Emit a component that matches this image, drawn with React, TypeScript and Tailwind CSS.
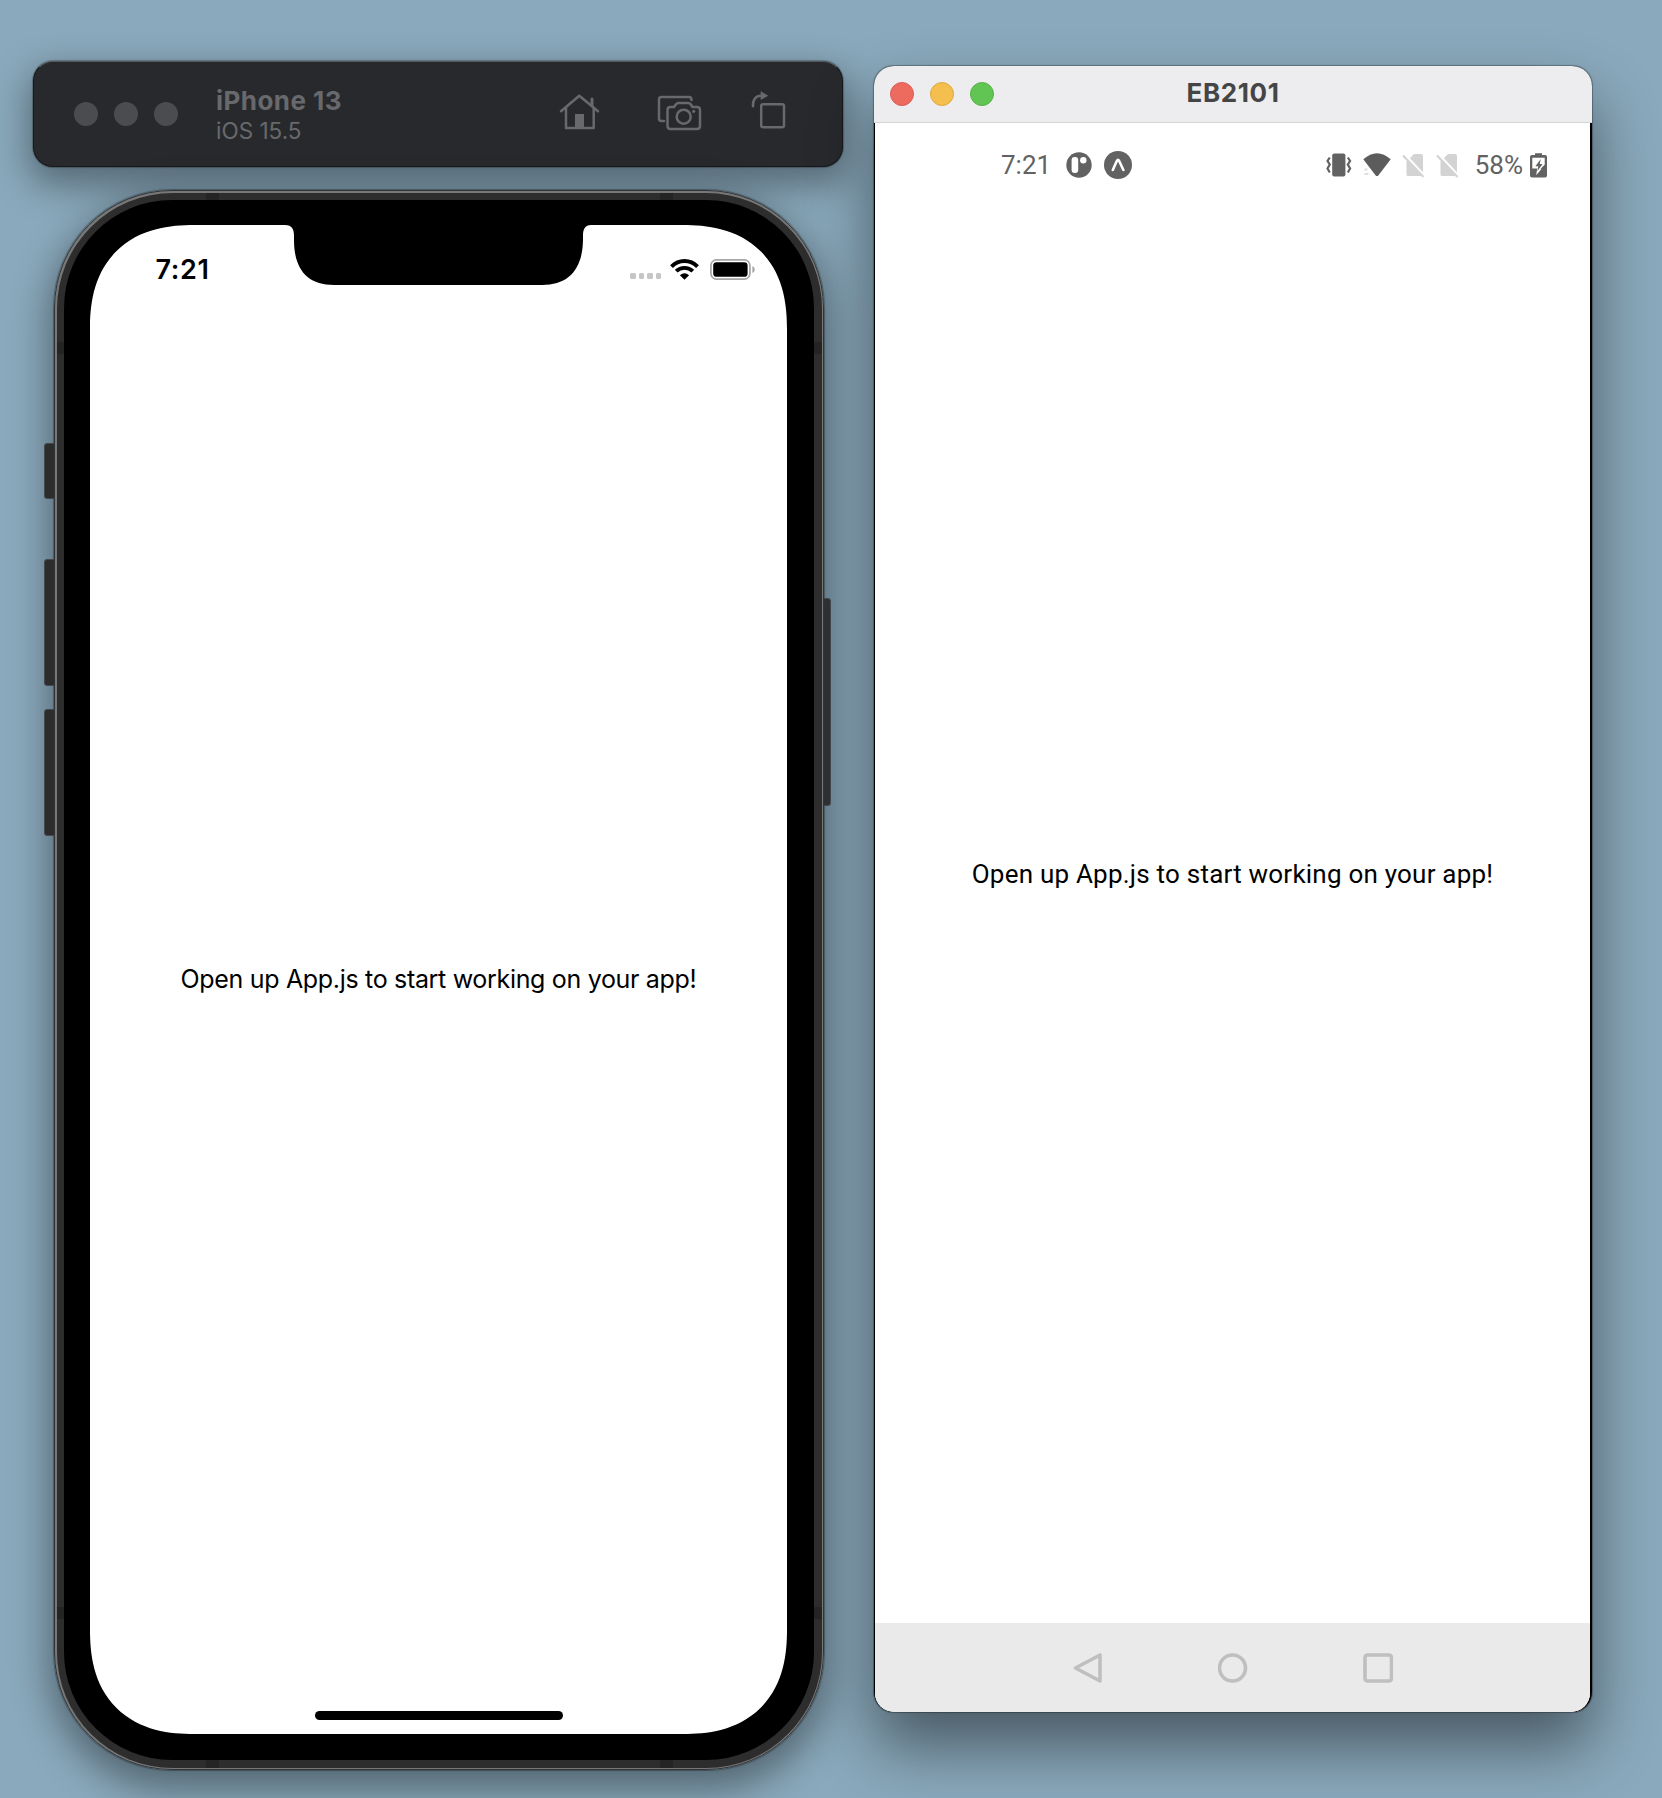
function HomeIcon() {
  return (
    <svg width="44" height="40" viewBox="0 0 44 40" fill="none" stroke="#68696c" strokeWidth="2.5" strokeLinecap="round" strokeLinejoin="round">
      <path d="M3 19.3 21.3 3.8 40 19.3" />
      <path d="M8 16V36H35.7V16" />
      <path d="M34 7v6.5" strokeWidth="3" />
      <path d="M17 22h9v14h-9z" fill="#68696c" stroke="none" />
    </svg>
  );
}

function CameraIcon() {
  return (
    <svg width="48" height="42" viewBox="0 0 48 42" fill="none" stroke="#68696c" strokeWidth="2.5" strokeLinecap="round" strokeLinejoin="round">
      <path d="M8 29H5.5Q3 29 3 26.5V7.5Q3 5 5.5 5H33Q35.5 5 35.5 8" />
      <path d="M14.5 15H18l2-2.8Q21 11 22.500 11h9.5Q33.700 11 34.700 12.200L36.500 15H41Q44 15 44 18V34Q44 37 41 37H14.500Q11.500 37 11.500 34V18Q11.500 15 14.500 15Z" />
      <circle cx="27.700" cy="24.700" r="7" />
      <circle cx="37.700" cy="19.300" r="1.600" fill="#68696c" stroke="none" />
    </svg>
  );
}

function RotateIcon() {
  return (
    <svg width="38" height="44" viewBox="0 0 38 44" fill="none" stroke="#68696c" strokeWidth="2.5" strokeLinecap="round" strokeLinejoin="round">
      <rect x="11.200" y="16.300" width="22.800" height="23" rx="2" />
      <path d="M3 18.300C2.600 11.500 6 7.800 11 7.700" />
      <path d="M10.700 3.300 18.300 7.700 10.700 12Z" fill="#68696c" stroke="none" />
    </svg>
  );
}

function IosWifi() {
  return (
    <svg width="29" height="21" viewBox="0 0 29 21" fill="none" stroke="#000" strokeWidth="3.900">
      <path d="M1.500 7.600C8.700 0.200 20.300 0.200 27.500 7.600" />
      <path d="M6.200 12.200C10.800 7.700 18.200 7.700 22.800 12.200" />
      <path d="M14.500 20.700 9.900 16.200Q14.500 12.400 19.100 16.200Z" fill="#000" stroke="none" />
    </svg>
  );
}

function IosBattery() {
  return (
    <svg width="46" height="21" viewBox="0 0 46 21">
      <rect x="0.900" y="0.900" width="39" height="19.200" rx="5.500" fill="none" stroke="#a6a6a6" strokeWidth="1.700" />
      <rect x="3.200" y="3.200" width="34.400" height="14.600" rx="3.400" />
      <path d="M42.400 7v7q2.400-1 2.400-3.500T42.400 7Z" fill="#a6a6a6" />
    </svg>
  );
}

function Notch() {
  return (
    <svg className="absolute left-[195px] top-0" width="306" height="61" viewBox="0 0 306 61">
      <path d="M0 0C7 0 9 4 9 11V15C9 44 22 60 49 60H257C284 60 297.500 44 298 15V11C298 4 300 0 306 0V-1H0Z" />
    </svg>
  );
}

function PatreonBadge() {
  return (
    <svg width="26" height="26" viewBox="0 0 26 26">
      <circle cx="13" cy="13" r="12.700" fill="#626262" />
      <rect x="5.600" y="5" width="6.600" height="16" rx="3" fill="#fff" />
      <circle cx="17.300" cy="8.300" r="3.200" fill="#fff" />
    </svg>
  );
}

function ExpoBadge() {
  return (
    <svg width="28" height="28" viewBox="0 0 28 28">
      <circle cx="14" cy="14" r="14" fill="#626262" />
      <path d="M8.800 19 12.900 9.800Q14 7.900 15.100 9.800L19.400 19" fill="none" stroke="#fff" strokeWidth="2.600" strokeLinecap="round" />
    </svg>
  );
}

function VibrateIcon() {
  return (
    <svg width="26" height="24" viewBox="0 0 26 24" fill="none" stroke="#626262" strokeWidth="2.200">
      <rect x="6.200" y="0.500" width="13.200" height="23" rx="2" fill="#626262" stroke="none" />
      <path d="M3.800 4.500 1.500 8 3.800 11.500 1.500 15.500 3.800 19.500" />
      <path d="M21.800 4.500 24.100 8 21.800 11.500 24.100 15.500 21.800 19.500" />
    </svg>
  );
}

function AndroidWifi() {
  return (
    <svg width="28" height="24" viewBox="0 0 28 24">
      <path d="M0.300 6.300Q14-5.700 27.700 6.300L15.300 22.400Q14 23.600 12.700 22.400Z" fill="#5c5c5c" />
      <path d="M1.500 16.500h3M1.500 21h4" stroke="#dedede" strokeWidth="2" />
    </svg>
  );
}

function NoSim() {
  return (
    <svg width="23" height="25" viewBox="0 0 23 25">
      <path d="M4.500 8.500 12 1H19Q21 1 21 3V22Q21 23 20 23H6Q4.500 23 4.500 21.500Z" fill="#d3d3d3" />
      <path d="M2.500 1 22.500 22.500" stroke="#fff" strokeWidth="2.200" />
      <path d="M1 2.500 21.500 24" stroke="#d3d3d3" strokeWidth="2" />
    </svg>
  );
}

function ChargingBattery() {
  return (
    <svg width="17" height="25" viewBox="0 0 17 25">
      <path d="M5 0.300h7V2h3Q17 2 17 4V22.500Q17 24.500 15 24.500H2Q0 24.500 0 22.500V4Q0 2 2 2H5Z" fill="#626262" />
      <path d="M2.300 4.800H14.700V12L6.200 22.300 7.200 15.500H2.300Z" fill="#fff" />
      <path d="M10.800 6 5.400 13.200H8.300L7.300 18.300 12.600 11H9.700Z" fill="#626262" />
      <path d="M14.800 11.500V16H10.600Z" fill="#626262" />
    </svg>
  );
}

function SimulatorToolbar() {
  return (
    <header className="ml-[33px] flex h-[106px] w-[810px] items-center rounded-[20px] border border-[#17191c] border-t-[#55595c] bg-[#28292d] pl-10 pr-[54px] shadow-[0_0_1px_1px_rgba(0,0,0,0.25),0_14px_36px_4px_rgba(0,0,0,0.38)]">
      <div className="flex gap-4">
        <i className="size-6 rounded-full bg-[#4b4c50]" />
        <i className="size-6 rounded-full bg-[#4b4c50]" />
        <i className="size-6 rounded-full bg-[#4b4c50]" />
      </div>
      <div className="ml-[38px] flex-1 text-[#68696c]">
        <div className="text-[26px] font-bold leading-[32px] tracking-[0.450px]">iPhone 13</div>
        <div className="text-[22.500px] leading-[27px]">iOS 15.5</div>
      </div>
      <div className="flex items-start pb-[6px]">
        <div className="mt-1"><HomeIcon /></div>
        <div className="ml-[54px] mt-1"><CameraIcon /></div>
        <div className="ml-[46px]"><RotateIcon /></div>
      </div>
    </header>
  );
}

function IPhone() {
  return (
    <section className="relative ml-[54px] mt-[23px] h-[1580px] w-[770px] rounded-[118px] shadow-[0_0_1px_1px_rgba(0,0,0,0.3),0_14px_38px_5px_rgba(0,0,0,0.4)]">
      <i className="absolute left-[-10px] top-[253px] h-[56px] w-[12px] rounded-[3px] border border-[#45494c] bg-[#2c2c2c]" />
      <i className="absolute left-[-10px] top-[369px] h-[127px] w-[12px] rounded-[3px] border border-[#45494c] bg-[#2c2c2c]" />
      <i className="absolute left-[-10px] top-[519px] h-[127px] w-[12px] rounded-[3px] border border-[#45494c] bg-[#2c2c2c]" />
      <i className="absolute right-[-7px] top-[408px] h-[208px] w-[10px] rounded-[3px] border border-[#45494c] bg-[#2c2f33]" />
      <div className="relative h-full rounded-[118px] border border-[#303436] bg-[#777] p-[1.500px]">
        <div className="relative h-full overflow-hidden rounded-[116px] bg-[#2d2d2d] p-[7.500px]">
          <i className="absolute left-[149px] top-0 h-full w-[13px] bg-[#242424]" />
          <i className="absolute right-[149px] top-0 h-full w-[13px] bg-[#242424]" />
          <i className="absolute left-0 top-[149px] h-[12px] w-full bg-[#242424]" />
          <i className="absolute bottom-[149px] left-0 h-[12px] w-full bg-[#242424]" />
          <div className="relative h-full rounded-[108px] bg-black pb-[26px] pl-[26px] pr-[27px] pt-[25px]">
            <div className="relative flex h-full flex-col overflow-hidden rounded-[104px] bg-white [corner-shape:superellipse(1.25)]">
              <Notch />
              <div className="absolute inset-x-0 top-[28px] flex h-8 items-center pl-[65.500px] pr-[31px]">
                <span className="pt-[2px] text-[27px] font-semibold leading-8 tracking-[0.600px]">7:21</span>
                <div className="ml-auto flex gap-[3px] pt-[14px]">
                  <i className="size-[5.400px] rounded-[1.500px] bg-[#c6c6c6]" />
                  <i className="size-[5.400px] rounded-[1.500px] bg-[#c6c6c6]" />
                  <i className="size-[5.400px] rounded-[1.500px] bg-[#c6c6c6]" />
                  <i className="size-[5.400px] rounded-[1.500px] bg-[#c6c6c6]" />
                </div>
                <div className="ml-[9px]"><IosWifi /></div>
                <div className="ml-[11px]"><IosBattery /></div>
              </div>
              <div className="flex flex-1 items-center justify-center">
                <p className="mb-[2px] whitespace-nowrap text-[25px] leading-[30px] tracking-[-0.320px] text-black">Open up App.js to start working on your app!</p>
              </div>
              <i className="absolute bottom-[14px] left-[225px] h-[9px] w-[248px] rounded-full bg-black" />
            </div>
          </div>
        </div>
      </div>
    </section>
  );
}

function AndroidWindow() {
  return (
    <section className="ml-[31px] mt-[66px] flex h-[1646px] w-[718px] flex-col overflow-hidden rounded-[20px] bg-black shadow-[0_0_1px_0.500px_rgba(0,0,0,0.3),0_34px_64px_0px_rgba(0,0,0,0.48)]">
      <header className="relative flex h-[57px] items-center justify-center border-b border-[#d3d3d5] bg-[#ededef]">
        <div className="absolute left-4 top-4 flex gap-4">
          <i className="size-6 rounded-full border border-[#d95f55] bg-[#ec6a5e]" />
          <i className="size-6 rounded-full border border-[#dba843] bg-[#f4bf4f]" />
          <i className="size-6 rounded-full border border-[#57b045] bg-[#61c554]" />
        </div>
        <h1 className="pb-[2px] text-[26px] font-bold leading-[32px] tracking-[0.600px] text-[#444547]">EB2101</h1>
      </header>
      <div className="ml-px mr-[2px] flex flex-1 flex-col rounded-b-[19px] bg-white font-[Roboto,sans-serif]">
        <div className="mt-[26px] flex h-8 items-center pl-[126px] pr-[43px] text-[26px] leading-[32px] text-[#626262]">
          <span>7:21</span>
          <div className="ml-[15px]"><PatreonBadge /></div>
          <div className="ml-[12px]"><ExpoBadge /></div>
          <div className="ml-auto"><VibrateIcon /></div>
          <div className="ml-[11px]"><AndroidWifi /></div>
          <div className="ml-[11px]"><NoSim /></div>
          <div className="ml-[11px]"><NoSim /></div>
          <span className="ml-[16px]">58%</span>
          <div className="ml-[7px]"><ChargingBattery /></div>
        </div>
        <div className="flex flex-1 items-center justify-center">
          <p className="mb-[57px] whitespace-nowrap text-[26px] leading-[30px] tracking-[0.220px] text-black">Open up App.js to start working on your app!</p>
        </div>
        <nav className="flex h-[89px] items-center gap-[115px] rounded-b-[19px] bg-[#eaeaea] pl-[198px]">
          <svg width="30" height="30" viewBox="0 0 30 30" fill="none" stroke="#bfbfbf" strokeWidth="3.600" strokeLinejoin="round">
            <path d="M27 2V28L2.500 15Z" />
          </svg>
          <svg width="30" height="30" viewBox="0 0 30 30" fill="none" stroke="#bfbfbf" strokeWidth="3.600">
            <circle cx="14.500" cy="15" r="13" />
          </svg>
          <svg width="30" height="30" viewBox="0 0 30 30" fill="none" stroke="#bfbfbf" strokeWidth="3.600">
            <rect x="2" y="2" width="26.500" height="26" rx="2.500" />
          </svg>
        </nav>
      </div>
    </section>
  );
}

export default function App() {
  return (
    <main className="flex h-[1798px] w-[1662px] items-start overflow-hidden bg-[#8aa9bc] font-[Inter,sans-serif]">
      <div className="w-[843px] shrink-0 pt-[61px]">
        <SimulatorToolbar />
        <IPhone />
      </div>
      <AndroidWindow />
    </main>
  );
}
